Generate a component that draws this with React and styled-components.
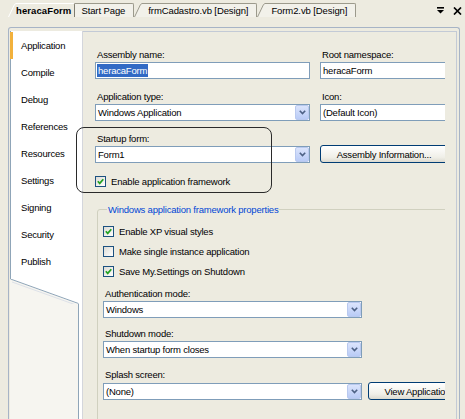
import React from 'react'
import styled, { createGlobalStyle } from 'styled-components';

const GlobalStyle = createGlobalStyle`
  html, body {
    margin: 0;
    padding: 0;
  }
  body {
    width: 465px;
    height: 419px;
    overflow: hidden;
    background: #f4f3ee;
    font-family: "Liberation Sans", Tahoma, Arial, sans-serif;
    font-size: 9.5px;
    letter-spacing: -0.2px;
    color: #000;
  }
`

const beige = '#edebe0';

const App = () => {
  return (
    <>
      <GlobalStyle />
      <Page>
        <TabStrip>
          <DocTab label="heracaForm" active />
          <DocTab label="Start Page" hidden />
          <DocTab label="frmCadastro.vb [Design]" />
          <DocTab label="Form2.vb [Design]" />
          <StripSpacer />
          <StripIcons>
            <svg width="8" height="7" viewBox="0 0 8 7">
              <rect x="0" y="0" width="7" height="1.6" fill="#000" />
              <polygon points="0,3 7,3 3.5,6.6" fill="#000" />
            </svg>
            <svg width="9" height="8" viewBox="0 0 9 8">
              <path d="M1 0.5 L8 7.5 M8 0.5 L1 7.5" stroke="#000" strokeWidth="1.7" />
            </svg>
          </StripIcons>
        </TabStrip>

        <Panel>
          <PanelInner>
            <Sidebar>
              <SideTabs>
                {['Application', 'Compile', 'Debug', 'References', 'Resources', 'Settings', 'Signing', 'Security', 'Publish'].map((t, i) => (
                  <SideItem key={t} $selected={i === 0}>{t}</SideItem>
                ))}
              </SideTabs>
              <Curl width="73" height="25" viewBox="0 0 73 25">
                <polygon points="0,0 73,0 73,25 68,25" fill="#fff" />
                <line x1="0.5" y1="0" x2="68.5" y2="24.5" stroke="#8fa5b8" />
                <line x1="2" y1="3" x2="66" y2="26" stroke="#dde1e8" />
                <line x1="72.5" y1="0" x2="72.5" y2="25" stroke="#d4d6dc" />
              </Curl>
              <SideTail />
            </Sidebar>

            <Content>
              <Viewport>
                <FormGrid>
                  <Field>
                    <Label>Assembly name:</Label>
                    <TextBox><Selected>heracaForm</Selected></TextBox>
                  </Field>
                  <Field>
                    <Label>Root namespace:</Label>
                    <TextBox>heracaForm</TextBox>
                  </Field>

                  <Field>
                    <Label>Application type:</Label>
                    <Combo value="Windows Application" />
                  </Field>
                  <Field>
                    <Label>Icon:</Label>
                    <TextBox>(Default Icon)</TextBox>
                  </Field>

                  <Field>
                    <Label>Startup form:</Label>
                    <Combo value="Form1" />
                  </Field>
                  <Field $end>
                    <Button $width={128}>Assembly Information...</Button>
                  </Field>
                </FormGrid>

                <CheckRow $height={14} $top={11}>
                  <CheckBox checked />
                  Enable application framework
                </CheckRow>

                <Group>
                  <Legend>Windows application framework properties</Legend>
                  <CheckRow $height={20}>
                    <CheckBox checked />
                    Enable XP visual styles
                  </CheckRow>
                  <CheckRow $height={20}>
                    <CheckBox />
                    Make single instance application
                  </CheckRow>
                  <CheckRow $height={20}>
                    <CheckBox checked />
                    Save My.Settings on Shutdown
                  </CheckRow>

                  <Field $top={6}>
                    <Label>Authentication mode:</Label>
                    <Combo value="Windows" $width={259} />
                  </Field>
                  <Field $top={9}>
                    <Label>Shutdown mode:</Label>
                    <Combo value="When startup form closes" $width={259} />
                  </Field>
                  <Field $top={10}>
                    <Label>Splash screen:</Label>
                    <ButtonRow>
                      <Combo value="(None)" $width={259} />
                      <Button $width={129}>View Application Events</Button>
                    </ButtonRow>
                  </Field>
                </Group>
              </Viewport>
            </Content>
          </PanelInner>
        </Panel>

        <Highlight />
      </Page>
    </>
  )
}

const DocTab = ({ label, active, hidden }) => (
  <TabWrap $active={active} $hidden={hidden}>
    <svg width="8" height="14" viewBox="0 0 8 14">
      <polygon points="0,14 6.5,1 8,0.5 8,14" fill={active ? beige : '#f2f1ea'} />
      <polyline points="0.5,14 6.5,1.5 8,0.5" fill="none" stroke={active ? '#ffffff' : '#9c9a8c'} />
    </svg>
    <TabBody $active={active}>{label}</TabBody>
  </TabWrap>
)

const Combo = ({ value, $width }) => (
  <ComboBox $width={$width}>
    <ComboText>{value}</ComboText>
    <DropButton>
      <svg width="7" height="5" viewBox="0 0 7 5">
        <path d="M0.8 0.8 L3.5 3.6 L6.2 0.8" fill="none" stroke="#4d6185" strokeWidth="1.6" />
      </svg>
    </DropButton>
  </ComboBox>
)

const CheckBox = ({ checked }) => (
  <Box>
    {checked && (
      <svg width="9" height="9" viewBox="0 0 9 9">
        <path d="M1.8 4.3 L3.7 6.4 L7.3 2.2" fill="none" stroke="#21a121" strokeWidth="1.7" />
      </svg>
    )}
  </Box>
)

export default App;

const Page = styled.div`
  position: relative;
  width: 465px;
  height: 419px;
  overflow: hidden;
  display: flex;
  flex-direction: column;
  background: ${beige};
`

const TabStrip = styled.div`
  height: 17px;
  flex: none;
  display: flex;
  align-items: flex-end;
  padding-left: 8px;
`

const TabWrap = styled.div`
  display: flex;
  height: 14px;
  position: relative;
  z-index: ${p => (p.$active ? 2 : 1)};
  margin-left: ${p => (p.$hidden ? '-8px' : '0')};
`

const TabBody = styled.div`
  height: 14px;
  box-sizing: border-box;
  line-height: 13px;
  white-space: nowrap;
  padding: 0 ${p => (p.$active ? '3px' : '8px')} 0 ${p => (p.$active ? '0' : '6px')};
  border-top: 1px solid ${p => (p.$active ? '#ffffff' : '#9c9a8c')};
  border-right: 1px solid ${p => (p.$active ? '#7f7c70' : '#9c9a8c')};
  border-top-right-radius: 2px;
  background: ${p => (p.$active ? beige : '#f2f1ea')};
  font-weight: ${p => (p.$active ? 'bold' : 'normal')};
  letter-spacing: ${p => (p.$active ? '0.1px' : '-0.1px')};
`

const StripSpacer = styled.div`
  flex: 1;
`

const StripIcons = styled.div`
  align-self: flex-start;
  margin-top: 7px;
  display: flex;
  align-items: flex-start;
  gap: 8px;
  padding-right: 3px;
`

const Panel = styled.div`
  flex: 1;
  display: flex;
  margin: 10px 0 0 8px;
  width: 452px;
  min-height: 0;
  box-sizing: border-box;
  border: 1px solid #a7b4c6;
  border-bottom: none;
  border-radius: 3px 3px 0 0;
  padding: 3px 2px 0 1px;
  background: ${beige};
`

const PanelInner = styled.div`
  flex: 1;
  min-width: 0;
  display: flex;
`

const Sidebar = styled.div`
  width: 73px;
  flex: none;
  display: flex;
  flex-direction: column;
  background: #f6f5f0;
`

const SideTabs = styled.div`
  background: #fff;
  border-left: 1px solid #8fa5b8;
  border-right: 1px solid #d4d6dc;
  padding: 1px 0 4px;
`

const SideItem = styled.div`
  height: 27px;
  display: flex;
  align-items: center;
  padding-left: ${p => (p.$selected ? '8px' : '10px')};
  margin-left: ${p => (p.$selected ? '-1px' : '0')};
  border-left: ${p => (p.$selected ? '3px solid #f2b13c' : 'none')};
  white-space: nowrap;
`

const Curl = styled.svg`
  display: block;
  flex: none;
`

const SideTail = styled.div`
  flex: 1;
  margin-left: 68px;
  background: #fff;
  border-left: 1px solid #8fa5b8;
  border-right: 1px solid #d4d6dc;
`

const Content = styled.div`
  flex: 1;
  min-width: 0;
  border-top: 1px solid #c3cad6;
  border-right: 1px solid #c3cad6;
  padding: 16px 11px 0 12px;
`

const Viewport = styled.div`
  width: 100%;
  height: 100%;
  overflow: hidden;
`

const FormGrid = styled.div`
  display: grid;
  grid-template-columns: 215px 140px;
  column-gap: 10px;
  row-gap: 11px;
  width: 365px;
`

const Field = styled.div`
  display: flex;
  flex-direction: column;
  justify-content: ${p => (p.$end ? 'flex-end' : 'flex-start')};
  margin-top: ${p => p.$top || 0}px;
`

const Label = styled.div`
  height: 13px;
  line-height: 13px;
  padding-left: 2px;
  margin-bottom: 1px;
  white-space: nowrap;
`

const TextBox = styled.div`
  height: 17px;
  box-sizing: border-box;
  border: 1px solid #7f9db9;
  background: #fff;
  padding: 0 2px;
  display: flex;
  align-items: center;
  white-space: nowrap;
  overflow: hidden;
`

const Selected = styled.span`
  background: #316ac5;
  color: #fff;
  padding: 0 1px;
  margin-left: -1px;
  line-height: 13px;
`

const ComboBox = styled.div`
  width: ${p => (p.$width ? `${p.$width}px` : 'auto')};
  flex: none;
  height: 17px;
  box-sizing: border-box;
  border: 1px solid #7f9db9;
  background: #fff;
  display: flex;
  align-items: stretch;
`

const ComboText = styled.div`
  flex: 1;
  padding-left: 2px;
  display: flex;
  align-items: center;
  white-space: nowrap;
  overflow: hidden;
`

const DropButton = styled.div`
  width: 14px;
  box-sizing: border-box;
  border: 1px solid #b9c9ef;
  border-radius: 2px;
  background: linear-gradient(#dbe4fc, #b9cbf6);
  display: flex;
  align-items: center;
  justify-content: center;
`

const Button = styled.div`
  width: ${p => p.$width}px;
  flex: none;
  height: 18px;
  box-sizing: border-box;
  border: 1px solid #003c74;
  border-radius: 3px;
  background: linear-gradient(#ffffff, #f0efe8 70%, #dcdad0);
  display: flex;
  align-items: center;
  justify-content: center;
  white-space: nowrap;
  overflow: hidden;
`

const ButtonRow = styled.div`
  display: flex;
  gap: 6px;
  align-items: center;
`

const CheckRow = styled.div`
  height: ${p => p.$height}px;
  margin-top: ${p => p.$top || 0}px;
  display: flex;
  align-items: center;
  gap: 5px;
  white-space: nowrap;
`

const Box = styled.div`
  width: 11px;
  height: 11px;
  flex: none;
  box-sizing: border-box;
  border: 1px solid #1c5180;
  background: linear-gradient(135deg, #dcdbd5, #ffffff);
  display: flex;
  align-items: center;
  justify-content: center;
`

const Group = styled.fieldset`
  margin: 15px 0 0 2px;
  width: 360px;
  box-sizing: border-box;
  border: 1px solid #d0d0bf;
  border-radius: 3px;
  padding: 5px 0 30px 5px;
  min-width: 0;
`

const Legend = styled.legend`
  margin-left: 4px;
  padding: 0 1px;
  line-height: 13px;
  color: #0046d5;
`

const Highlight = styled.div`
  position: absolute;
  left: 76px;
  top: 127px;
  width: 196px;
  height: 66px;
  box-sizing: border-box;
  border: 1px solid #2a2a2a;
  border-radius: 8px;
  pointer-events: none;
`
